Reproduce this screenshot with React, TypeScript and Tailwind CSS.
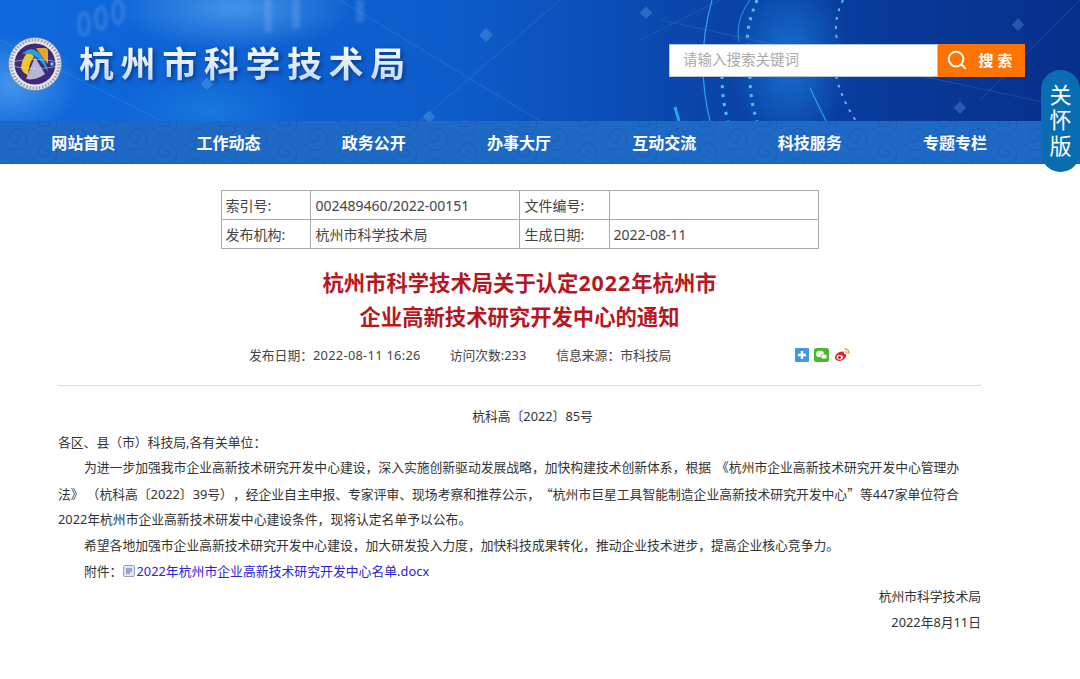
import { Search } from "lucide-react";

const navItems = ["网站首页", "工作动态", "政务公开", "办事大厅", "互动交流", "科技服务", "专题专栏"];

function HeaderArt() {
    return (
        <svg className="absolute inset-0 w-full h-full" viewBox="0 0 1080 121" preserveAspectRatio="none">
            <defs>
                <linearGradient id="sky" x1="0" y1="0" x2="1" y2="0">
                    <stop offset="0" stopColor="#0f68dc" />
                    <stop offset="0.42" stopColor="#0d5ccb" />
                    <stop offset="0.66" stopColor="#0a44a8" />
                    <stop offset="1" stopColor="#072f8a" />
                </linearGradient>
                <radialGradient id="glow1">
                    <stop offset="0" stopColor="#5aa9f0" stopOpacity="0.7" />
                    <stop offset="1" stopColor="#5aa9f0" stopOpacity="0" />
                </radialGradient>
                <radialGradient id="glow2">
                    <stop offset="0" stopColor="#1a7fe0" stopOpacity="0.75" />
                    <stop offset="1" stopColor="#1a7fe0" stopOpacity="0" />
                </radialGradient>
                <filter id="soft">
                    <feGaussianBlur stdDeviation="1.6" />
                </filter>
            </defs>
            <rect width="1080" height="121" fill="url(#sky)" />
            <ellipse cx="235" cy="8" rx="120" ry="42" fill="url(#glow1)" />
            <ellipse cx="10" cy="85" rx="70" ry="50" fill="url(#glow1)" />
            <ellipse cx="210" cy="110" rx="90" ry="40" fill="url(#glow2)" />
            <ellipse cx="790" cy="60" rx="60" ry="90" fill="url(#glow2)" />
            <g stroke="#8cc4f5" strokeOpacity="0.16" fill="none">
                <path d="M0 40 L160 120" />
                <path d="M340 0 L540 121" />
                <path d="M420 121 L560 0" />
                <path d="M640 40 L720 0" />
                <path d="M980 100 L1080 0" />
                <path d="M660 20 L1080 110" />
            </g>
            <g fill="#8cc4f5" fillOpacity="0.25">
                <rect x="481" y="30" width="10" height="10" transform="rotate(45 486 35)" />
                <rect x="203" y="79" width="9" height="9" transform="rotate(45 207 83)" />
                <rect x="425" y="112" width="9" height="9" transform="rotate(45 429 116)" />
                <rect x="642" y="8" width="9" height="9" transform="rotate(45 646 12)" />
                <rect x="1014" y="20" width="9" height="9" transform="rotate(45 1018 24)" />
                <rect x="956" y="103" width="9" height="9" transform="rotate(45 960 107)" />
            </g>
            <g stroke="#9ccaf5" strokeOpacity="0.22" strokeWidth="4" fill="none" filter="url(#soft)">
                <ellipse cx="84" cy="24" rx="5" ry="11" />
                <ellipse cx="101" cy="18" rx="5" ry="11" />
                <ellipse cx="118" cy="12" rx="5" ry="11" />
                <path d="M268 0 V32 M296 0 V28 M360 0 V22" strokeWidth="8" />
            </g>
            <g fill="none" stroke="#2aa5ec" strokeWidth="1.2">
                <path d="M712 0 Q695 60 710 121" />
                <path d="M750 0 Q735 20 739 42" strokeOpacity="0.7" />
                <path d="M810 88 Q818 105 826 121" />
            </g>
            <g fill="none" stroke="#4fc0f0" strokeWidth="3" strokeDasharray="3 6">
                <path d="M757 0 Q745 30 748 44" />
                <path d="M722 76 Q722 100 728 121" />
                <path d="M750 76 Q750 100 757 121" />
                <path d="M843 0 Q832 22 838 44" strokeWidth="2" />
                <path d="M836 76 Q842 100 856 121" strokeWidth="2" />
            </g>
            <path d="M675 107 L679 121" stroke="#2aa5ec" strokeWidth="3" />
        </svg>
    );
}

function Logo() {
    return (
        <svg width="54" height="54" viewBox="0 0 54 54" className="shrink-0">
            <circle cx="27" cy="27" r="26.5" fill="#e4e7ee" stroke="#6a6f80" strokeWidth="0.6" />
            <circle cx="27" cy="27" r="24" fill="none" stroke="#555a70" strokeWidth="3" strokeDasharray="1.6 1.6" strokeOpacity="0.5" />
            <circle cx="27" cy="27" r="20.5" fill="#3c2a78" />
            <path d="M13 30 Q15 18 22 14 L26 20 Q21 25 20 38 Q14 36 13 30 Z" fill="#f3c61e" />
            <path d="M28 11 H37 Q40 11 40 14 V27 L33 18 Z" fill="#e9a52a" />
            <path d="M18 42 L27 20 L37 37 Q28 44 18 42 Z" fill="#b7b5d6" />
            <path d="M14 17 Q24 7 33 18 Q38 24 40 35 Q33 22 25 18 Q20 16 14 17 Z" fill="#27a2d6" />
            <ellipse cx="27" cy="27" rx="24" ry="4.5" fill="none" stroke="#c8d0ea" strokeWidth="0.6" />
            <circle cx="44" cy="27" r="1.8" fill="#78c5ee" />
        </svg>
    );
}

function NavSwirls() {
    return (
        <svg className="absolute inset-0 w-full h-full" xmlns="http://www.w3.org/2000/svg">
            <defs>
                <pattern id="swirl" width="60" height="30" patternUnits="userSpaceOnUse">
                    <g fill="none" stroke="#1a58a8" strokeOpacity="0.8" strokeWidth="1">
                        <path d="M15 15 a3 3 0 0 1 5 2 a6 6 0 0 1 -11 0 a9 9 0 0 1 15 -7 a12 12 0 0 1 -3 18 a15 15 0 0 1 -18 -6" />
                        <path d="M45 0 a3 3 0 0 1 5 2 a6 6 0 0 1 -11 0 a9 9 0 0 1 15 -7 a12 12 0 0 1 -3 18 a15 15 0 0 1 -18 -6" />
                        <path d="M45 30 a3 3 0 0 1 5 2 a6 6 0 0 1 -11 0 a9 9 0 0 1 15 -7 a12 12 0 0 1 -3 18 a15 15 0 0 1 -18 -6" />
                    </g>
                </pattern>
            </defs>
            <rect width="100%" height="100%" fill="url(#swirl)" />
        </svg>
    );
}

function ShareIcons() {
    return (
        <div className="flex items-center gap-[5px] mt-[-3px]">
            <svg width="14" height="14" viewBox="0 0 14 14">
                <rect width="14" height="14" rx="1" fill="#3d9ae8" />
                <path d="M7 3 V11 M3 7 H11" stroke="#fff" strokeWidth="2.4" />
            </svg>
            <svg width="15" height="14" viewBox="0 0 15 14">
                <rect width="15" height="14" rx="2.5" fill="#4fb52c" />
                <ellipse cx="6" cy="6" rx="4" ry="3.2" fill="#fff" />
                <ellipse cx="10" cy="8.5" rx="3.2" ry="2.6" fill="#fff" stroke="#4fb52c" strokeWidth="0.7" />
            </svg>
            <svg width="16" height="14" viewBox="0 0 16 14">
                <path d="M1 9.5 C1 6.5 5 3.5 8 3.5 C10 3.5 10.5 5 10 6.2 C12 5.7 12.7 7 12 8.6 C11.2 11 8.5 13 5.5 13 C3 13 1 11.7 1 9.5 Z" fill="#e3262e" />
                <ellipse cx="5.8" cy="9.3" rx="3" ry="2.4" fill="#fff" />
                <circle cx="5.5" cy="9.5" r="1.3" fill="#222" />
                <path d="M10.5 1 Q15 1 15 6" fill="none" stroke="#f2a23c" strokeWidth="1.4" />
                <path d="M10.5 3.4 Q12.8 3.4 12.8 5.6" fill="none" stroke="#f2a23c" strokeWidth="1" />
            </svg>
        </div>
    );
}

function DocIcon() {
    return (
        <svg width="12" height="12" viewBox="0 0 12 12" className="shrink-0 mr-[1.5px] ml-[0.5px]">
            <rect x="0.5" y="0.5" width="11" height="11" rx="1" fill="#dfe6f2" stroke="#93a3c4" />
            <path d="M3 4 H9 M3 6 H9 M3 8 H7" stroke="#4c6aa6" strokeWidth="1" />
        </svg>
    );
}

export default function App() {
    return (
        <div className="relative w-[1080px] h-[679px] overflow-hidden bg-white font-['Noto_Sans','Noto_Sans_CJK_SC',sans-serif] text-[#333]">
            <div className="relative h-[121px]">
                <HeaderArt />
                <div className="relative h-full flex items-center justify-between pl-[8px] pr-[55px] pt-[7px]">
                    <div className="flex items-center gap-[17px]">
                        <Logo />
                        <h1 className="text-[35px] leading-[42px] font-bold tracking-[6.6px] bg-gradient-to-b from-white to-[#bcd6f8] bg-clip-text text-transparent [filter:drop-shadow(2px_2px_2px_rgba(6,40,110,0.75))]">
                            杭州市科学技术局
                        </h1>
                    </div>
                    <div className="flex h-[33px] w-[356px] mt-[-8px]">
                        <div className="flex-1 flex items-center bg-white border border-[#b9c4d8] pl-[13px] text-[14.5px] text-[#aaa]">
                            请输入搜索关键词
                        </div>
                        <div className="w-[87px] flex items-center justify-center gap-[10px] bg-[#ff7300] text-white text-[15px] font-bold tracking-[4px]">
                            <Search size={22} strokeWidth={2.2} />
                            <span>搜索</span>
                        </div>
                    </div>
                </div>
            </div>

            <nav className="relative h-[43px] bg-[#1e69c6] border-b border-[#1a62bb]">
                <NavSwirls />
                <ul className="relative h-full flex pl-[10.5px] pt-[1px]">
                    {navItems.map((item) => (
                        <li key={item} className="w-[145.3px] flex items-center justify-center text-[16px] font-bold text-white">
                            {item}
                        </li>
                    ))}
                </ul>
            </nav>

            <div className="absolute right-0 top-[70px] w-[39px] h-[102px] rounded-[20px] bg-[#0b6db1] flex items-center justify-center text-white text-[22px] leading-[25.5px] pb-[2px]">
                <span className="w-[22px] break-all text-center">关怀版</span>
            </div>

            <main className="w-[923px] ml-[58px]">
                <table className="mt-[26px] mx-auto w-[598px] border-collapse table-fixed text-[14px] text-[#444]">
                    <tbody>
                        <tr className="h-[29px]">
                            <td className="w-[89px] border border-[#aaa] pl-[4px]">索引号:</td>
                            <td className="w-[209px] border border-[#aaa] pl-[5px]">002489460/2022-00151</td>
                            <td className="w-[90px] border border-[#aaa] pl-[5px]">文件编号:</td>
                            <td className="border border-[#aaa] pl-[4px]"></td>
                        </tr>
                        <tr className="h-[29px]">
                            <td className="border border-[#aaa] pl-[4px]">发布机构:</td>
                            <td className="border border-[#aaa] pl-[5px]">杭州市科学技术局</td>
                            <td className="border border-[#aaa] pl-[5px]">生成日期:</td>
                            <td className="border border-[#aaa] pl-[4px]">2022-08-11</td>
                        </tr>
                    </tbody>
                </table>

                <h2 className="mt-[17px] text-center text-[21.33px] leading-[34px] font-bold text-[#b5191f]">
                    杭州市科学技术局关于认定<span className="tracking-[1px]">2022</span>年杭州市
                    <br />
                    企业高新技术研究开发中心的通知
                </h2>

                <div className="mt-[10px] h-[24px] flex items-center pl-[191px] text-[12.8px] text-[#444]">
                    <span>发布日期&#xFF1A;<span className="tracking-[0.3px]">2022-08-11 16:26</span></span>
                    <span className="ml-[29px]">访问次数:233</span>
                    <span className="ml-[30px]">信息来源&#xFF1A;市科技局</span>
                    <div className="ml-[124px]">
                        <ShareIcons />
                    </div>
                </div>

                <div className="mt-[17px] border-t border-[#ddd]" />

                <div className="mt-[18px] text-[12.8px] leading-[25.6px] text-[#333] [text-spacing-trim:space-all]">
                    <p className="text-center indent-[26px]">杭科高〔2022〕85号</p>
                    <p>各区、县&#xFF08;市&#xFF09;科技局,各有关单位&#xFF1A;</p>
                    <p className="indent-[26px]">
                        为进一步加强我市企业高新技术研究开发中心建设&#xFF0C;深入实施创新驱动发展战略&#xFF0C;加快构建技术创新体系&#xFF0C;根据<span className="ml-[5px]">《杭州市企业高新技术研究开发中心管理办</span>
                        <br />
                        法》<span className="ml-[3px]">&#xFF08;杭科高〔2022〕39号&#xFF09;</span>&#xFF0C;经企业自主申报、专家评审、现场考察和推荐公示&#xFF0C;<span className="font-['Noto_Sans_CJK_SC']">&#x201C;</span>杭州市巨星工具智能制造企业高新技术研究开发中心<span className="font-['Noto_Sans_CJK_SC']">&#x201D;</span>等447家单位符合
                        <br />
                        2022年杭州市企业高新技术研发中心建设条件&#xFF0C;现将认定名单予以公布。
                    </p>
                    <p className="indent-[26px]">希望各地加强市企业高新技术研究开发中心建设&#xFF0C;加大研发投入力度&#xFF0C;加快科技成果转化&#xFF0C;推动企业技术进步&#xFF0C;提高企业核心竞争力。</p>
                    <p className="pl-[26px] flex items-center">
                        附件&#xFF1A;
                        <DocIcon />
                        <span className="text-[#2a22d6] tracking-[0.05px]">2022年杭州市企业高新技术研究开发中心名单.docx</span>
                    </p>
                    <p className="text-right">杭州市科学技术局</p>
                    <p className="text-right">2022年8月11日</p>
                </div>
            </main>
        </div>
    );
}
